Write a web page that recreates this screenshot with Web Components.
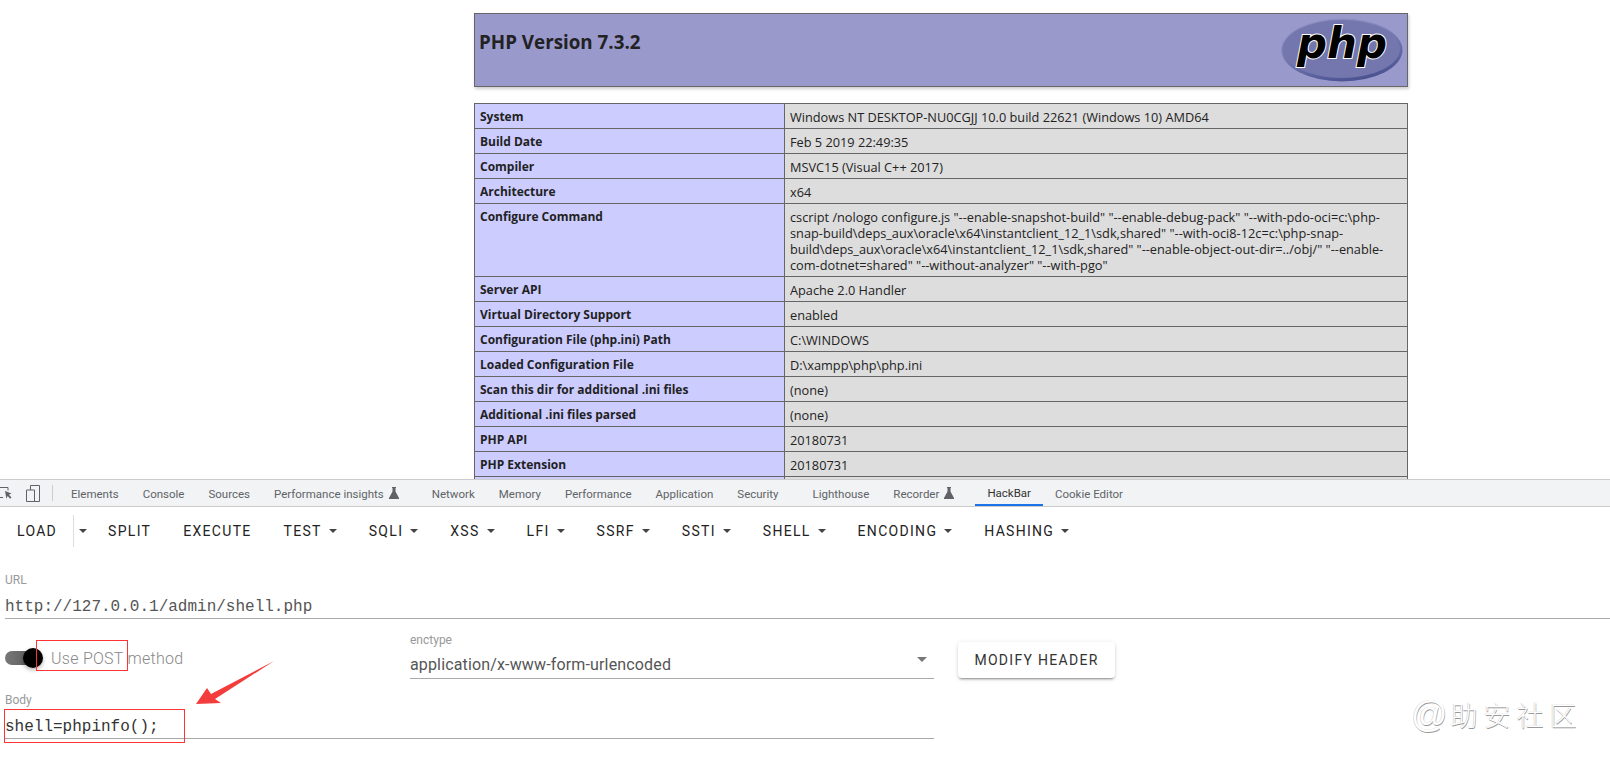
<!DOCTYPE html>
<html>
<head>
<meta charset="utf-8">
<title>HackBar</title>
<style>
  html, body { margin: 0; padding: 0; height: 763px; overflow: hidden; background: #fff; }
  body { font-family: Roboto, "Liberation Sans", sans-serif; position: relative; }
</style>
</head>
<body>
<php-panel>
  <php-row label="System">Windows NT DESKTOP-NU0CGJJ 10.0 build 22621 (Windows 10) AMD64</php-row>
  <php-row label="Build Date">Feb 5 2019 22:49:35</php-row>
  <php-row label="Compiler">MSVC15 (Visual C++ 2017)</php-row>
  <php-row label="Architecture">x64</php-row>
  <php-row label="Configure Command">cscript /nologo configure.js "--enable-snapshot-build" "--enable-debug-pack" "--with-pdo-oci=c:\php-<br>snap-build\deps_aux\oracle\x64\instantclient_12_1\sdk,shared" "--with-oci8-12c=c:\php-snap-<br>build\deps_aux\oracle\x64\instantclient_12_1\sdk,shared" "--enable-object-out-dir=../obj/" "--enable-<br>com-dotnet=shared" "--without-analyzer" "--with-pgo"</php-row>
  <php-row label="Server API">Apache 2.0 Handler</php-row>
  <php-row label="Virtual Directory Support">enabled</php-row>
  <php-row label="Configuration File (php.ini) Path">C:\WINDOWS</php-row>
  <php-row label="Loaded Configuration File">D:\xampp\php\php.ini</php-row>
  <php-row label="Scan this dir for additional .ini files">(none)</php-row>
  <php-row label="Additional .ini files parsed">(none)</php-row>
  <php-row label="PHP API">20180731</php-row>
  <php-row label="PHP Extension">20180731</php-row>
  <php-row label=""></php-row>
</php-panel>

<devtools-tabs>
  <dev-tab>Elements</dev-tab>
  <dev-tab>Console</dev-tab>
  <dev-tab>Sources</dev-tab>
  <dev-tab flask>Performance insights</dev-tab>
  <dev-tab>Network</dev-tab>
  <dev-tab>Memory</dev-tab>
  <dev-tab>Performance</dev-tab>
  <dev-tab>Application</dev-tab>
  <dev-tab wide>Security</dev-tab>
  <dev-tab>Lighthouse</dev-tab>
  <dev-tab flask>Recorder</dev-tab>
  <dev-tab active>HackBar</dev-tab>
  <dev-tab>Cookie Editor</dev-tab>
</devtools-tabs>

<hack-toolbar>
  <hack-button>LOAD</hack-button>
  <hack-button split></hack-button>
  <hack-button>SPLIT</hack-button>
  <hack-button>EXECUTE</hack-button>
  <hack-button menu>TEST</hack-button>
  <hack-button menu>SQLI</hack-button>
  <hack-button menu>XSS</hack-button>
  <hack-button menu>LFI</hack-button>
  <hack-button menu>SSRF</hack-button>
  <hack-button menu>SSTI</hack-button>
  <hack-button menu>SHELL</hack-button>
  <hack-button menu>ENCODING</hack-button>
  <hack-button menu>HASHING</hack-button>
</hack-toolbar>

<hack-field label="URL" tone="#555">http://127.0.0.1/admin/shell.php</hack-field>
<hack-options></hack-options>
<hack-field label="Body" tone="#333" style="width:929px;margin-top:13px">shell=phpinfo();</hack-field>

<mark-up></mark-up>

<script>
class PhpPanel extends HTMLElement {
  connectedCallback() {
    this.attachShadow({ mode: 'open' });
    this.shadowRoot.innerHTML = `
      <style>
        :host {
          display: block;
          height: 479px;
          overflow: hidden;
          padding-top: 13px;
          box-sizing: border-box;
          font-family: "Open Sans", "Noto Sans", sans-serif;
          font-size: 12px;
          color: #222;
        }
        .wrap { width: 934px; margin-left: 474px; }
        header {
          height: 74px;
          box-sizing: border-box;
          background: #9999cc;
          border: 1px solid #666;
          box-shadow: 1px 2px 3px #ccc;
          display: flex;
          justify-content: space-between;
          padding: 0 4px 0 4px;
        }
        h1 { margin: 16px 0 0; font-size: 18.8px; line-height: 24px; font-weight: 700; }
        svg { width: 122px; height: 64px; margin-top: 4px; }
        .rows { margin-top: 16px; border: 1px solid #666; border-bottom: 0; }
      </style>
      <div class="wrap">
        <header>
          <h1>PHP Version 7.3.2</h1>
          <svg viewBox="0 0 122 64">
            <defs>
              <linearGradient id="rim" x1="0.2" y1="0" x2="0.6" y2="1">
                <stop offset="0" stop-color="#8f93c4"/>
                <stop offset=".55" stop-color="#7175ad"/>
                <stop offset="1" stop-color="#4a5290"/>
              </linearGradient>
            </defs>
            <ellipse cx="61" cy="32" rx="60.5" ry="31.5" fill="url(#rim)"/>
            <ellipse cx="60.5" cy="31" rx="58.5" ry="29" fill="#7377ae"/>
            <text x="16" y="40" font-family="DejaVu Sans" font-style="italic" font-weight="700" font-size="42" fill="#000" stroke="#fff" stroke-width="2" paint-order="stroke">php</text>
          </svg>
        </header>
        <div class="rows"><slot></slot></div>
      </div>`;
  }
}
customElements.define('php-panel', PhpPanel);

class PhpRow extends HTMLElement {
  connectedCallback() {
    this.attachShadow({ mode: 'open' });
    this.shadowRoot.innerHTML = `
      <style>
        :host { display: grid; grid-template-columns: 310px 1fr; border-bottom: 1px solid #666; line-height: 16px; }
        div { padding: 5px 5px 3px; min-height: 16px; }
        .e { background: #ccccff; font-weight: 700; border-right: 1px solid #666; }
        .v { background: #dddddd; font-size: 12.75px; white-space: nowrap; }
      </style>
      <div class="e">${this.getAttribute('label')}</div>
      <div class="v"><slot></slot></div>`;
  }
}
customElements.define('php-row', PhpRow);

class DevtoolsTabs extends HTMLElement {
  connectedCallback() {
    this.attachShadow({ mode: 'open' });
    this.shadowRoot.innerHTML = `
      <style>
        :host {
          display: flex;
          height: 28px;
          box-sizing: border-box;
          background: #f1f3f4;
          border-top: 1px solid #ccc;
          border-bottom: 1px solid #ccc;
          overflow: hidden;
        }
        svg { flex: none; }
        .sep { width: 1px; height: 16px; background: #ccc; margin: 5px 6px 0 9px; flex: none; }
      </style>
      <svg width="15" height="26" viewBox="0 0 15 26" style="margin-left:-3px">
        <path d="M0 7.5h11v3M0 17.5h6" fill="none" stroke="#5f6368"/>
        <path d="M8 11l6.5 2.6-2.6 1.2 2.6 2.6-1.3 1.3-2.6-2.6-1.2 2.6z" fill="#5f6368"/>
      </svg>
      <svg width="18" height="26" viewBox="0 0 18 26" style="margin-left:13px">
        <path d="M5.5 10V5.5h9v16h-13V10h8v11.5" fill="none" stroke="#5f6368"/>
      </svg>
      <div class="sep"></div>
      <slot></slot>`;
  }
}
customElements.define('devtools-tabs', DevtoolsTabs);

class DevTab extends HTMLElement {
  connectedCallback() {
    this.attachShadow({ mode: 'open' });
    const flask = this.hasAttribute('flask')
      ? '<svg width="10" height="12" viewBox="0 0 10 12"><path d="M3 0h4v1h-.5v3.5L10 11v1H0v-1l3.5-6.5V1H3z" fill="#5f6368"/></svg>'
      : '';
    this.shadowRoot.innerHTML = `
      <style>
        :host {
          display: flex;
          align-items: center;
          gap: 5px;
          height: 26px;
          padding: 2px 12px 0;
          box-sizing: border-box;
          font: 11.5px Roboto, sans-serif;
          color: #5f6368;
          white-space: nowrap;
        }
        :host([flask]) { padding-right: 21px; }
        :host([flask]) svg { margin-top: -3px; }
        :host([wide]) { padding-right: 22px; }
        :host([active]) { color: #333; border-bottom: 2px solid #1a73e8; padding-top: 2px; }
      </style>
      <slot></slot>${flask}`;
  }
}
customElements.define('dev-tab', DevTab);

class HackToolbar extends HTMLElement {
  connectedCallback() {
    this.attachShadow({ mode: 'open' });
    this.shadowRoot.innerHTML = `
      <style>
        :host { display: flex; height: 65px; padding: 8px 0 0 1px; box-sizing: border-box; align-items: flex-start; }
      </style>
      <slot></slot>`;
  }
}
customElements.define('hack-toolbar', HackToolbar);

class HackButton extends HTMLElement {
  connectedCallback() {
    this.attachShadow({ mode: 'open' });
    const caret = this.hasAttribute('menu') || this.hasAttribute('split') ? '<i></i>' : '';
    this.shadowRoot.innerHTML = `
      <style>
        :host {
          display: flex;
          align-items: center;
          height: 32px;
          padding: 0 16px;
          font: 400 14px Roboto, sans-serif;
          letter-spacing: 1.3px;
          color: #222;
          white-space: nowrap;
        }
        :host([split]) { padding: 0 5px 0 5px; border-left: 1px solid #ddd; }
        :host([menu]) { padding-right: 16px; }
        i { display: block; border: 4.5px solid transparent; border-top-color: #444; border-bottom: 0; margin-left: 7px; }
        :host([split]) i { margin-left: 0; }
      </style>
      <slot></slot>${caret}`;
  }
}
customElements.define('hack-button', HackButton);

class HackField extends HTMLElement {
  connectedCallback() {
    this.attachShadow({ mode: 'open' });
    this.shadowRoot.innerHTML = `
      <style>
        :host { display: block; margin-left: 5px; border-bottom: 1px solid #aaa; }
        label { display: block; font: 12px/16px Roboto, sans-serif; color: #999; }
        div {
          margin-top: 6px;
          padding-top: 1px;
          height: 23px;
          font: 16px/24px "Liberation Mono", monospace;
          color: ${this.getAttribute('tone')};
        }
      </style>
      <label>${this.getAttribute('label')}</label>
      <div><slot></slot></div>`;
  }
}
customElements.define('hack-field', HackField);

class HackOptions extends HTMLElement {
  connectedCallback() {
    this.attachShadow({ mode: 'open' });
    this.shadowRoot.innerHTML = `
      <style>
        :host { display: flex; height: 47px; margin-top: 13px; font-family: Roboto, sans-serif; }
        .toggle { width: 405px; margin-left: 5px; display: flex; align-items: center; height: 52px; }
        .track { width: 33px; height: 14px; border-radius: 7px; background: linear-gradient(90deg, #777, #555); position: relative; flex: none; }
        .knob { position: absolute; right: -5px; top: -3px; width: 20px; height: 20px; border-radius: 50%; background: #000; box-shadow: 0 2px 4px rgba(0,0,0,.3); }
        .toggle span { margin-left: 13px; font-size: 16px; font-weight: 300; letter-spacing: .27px; color: #888; white-space: nowrap; }
        .select { width: 524px; border-bottom: 1px solid #aaa; height: 46px; position: relative; }
        .select label { display: block; font-size: 12px; line-height: 16px; color: #999; }
        .select div { margin-top: 5px; font-size: 16px; line-height: 24px; letter-spacing: .15px; color: #555; }
        .select i { position: absolute; right: 7px; top: 25px; border: 5px solid transparent; border-top-color: #777; border-bottom: 0; }
        button {
          margin: 10px 0 0 24px;
          width: 157px;
          height: 36px;
          border: 0;
          border-radius: 4px;
          background: #fff;
          font: 400 14px Roboto, sans-serif;
          letter-spacing: 1.3px;
          color: #333;
          box-shadow: 0 3px 1px -2px rgba(0,0,0,.2), 0 2px 2px 0 rgba(0,0,0,.14), 0 1px 5px 0 rgba(0,0,0,.12);
        }
      </style>
      <div class="toggle"><div class="track"><div class="knob"></div></div><span>Use POST method</span></div>
      <div class="select">
        <label>enctype</label>
        <div>application/x-www-form-urlencoded</div>
        <i></i>
      </div>
      <button>MODIFY HEADER</button>`;
  }
}
customElements.define('hack-options', HackOptions);

// red annotations and the watermark lie over the page
class MarkUp extends HTMLElement {
  connectedCallback() {
    this.attachShadow({ mode: 'open' });
    this.shadowRoot.innerHTML = `
      <style>
        :host { position: absolute; inset: 0; pointer-events: none; }
        .box { position: absolute; border: 1px solid #f33; box-sizing: border-box; }
        svg { position: absolute; left: 0; top: 0; }
        .wm {
          position: absolute;
          left: 1411px;
          top: 694px;
          display: flex;
          align-items: center;
          font-family: "Noto Sans CJK SC", sans-serif;
          font-weight: 300;
          font-size: 27px;
          line-height: 42px;
          letter-spacing: 6px;
          color: #fff;
          text-shadow: .5px .5px 0 #999, -.5px -.5px 0 #ccc;
          white-space: nowrap;
        }
        .wm b { font: 400 36px "Liberation Sans", sans-serif; margin-right: 3px; letter-spacing: 0; }
      </style>
      <div class="box" style="left:36px;top:640px;width:92px;height:31px"></div>
      <div class="box" style="left:4px;top:709px;width:181px;height:34px"></div>
      <svg width="300" height="763"><polygon points="196,704 207,688 211,694 274,661 215,699 221,703" fill="#f33c3c"/></svg>
      <div class="wm"><b>@</b>助安社区</div>`;
  }
}
customElements.define('mark-up', MarkUp);
</script>
</body>
</html>
